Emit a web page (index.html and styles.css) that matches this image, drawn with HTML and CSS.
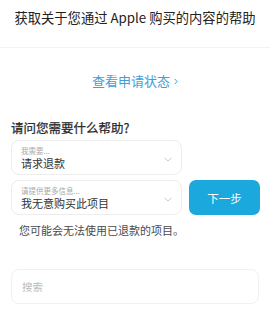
FILE: index.html
```html
<!DOCTYPE html>
<html lang="zh-CN">
<head>
<meta charset="utf-8">
<link rel="stylesheet" href="styles.css">
</head>
<body>
<header class="header">
  <h1 class="title">获取关于您通过 Apple 购买的内容的帮助</h1>
</header>
<div class="status">
  <a class="status-link" href="#">查看申请状态<svg class="status-chev" width="4" height="7" viewBox="0 0 4 7"><path d="M0.6 0.8 L3.2 3.5 L0.6 6.2" fill="none" stroke="currentColor" stroke-width="1"/></svg></a>
</div>
<section class="help">
  <h2 class="question">请问您需要什么帮助?</h2>
  <div class="form">
    <div class="field">
      <div class="field-text">
        <div class="field-label">我需要...</div>
        <div class="field-value">请求退款</div>
      </div>
      <svg class="chev" width="8" height="5" viewBox="0 0 8 5"><path d="M0.5 0.8 L4 4 L7.5 0.8" fill="none" stroke="#bcbcbc" stroke-width="0.8"/></svg>
    </div>
    <div class="spacer"></div>
    <div class="field">
      <div class="field-text">
        <div class="field-label">请提供更多信息...</div>
        <div class="field-value">我无意购买此项目</div>
      </div>
      <svg class="chev" width="8" height="5" viewBox="0 0 8 5"><path d="M0.5 0.8 L4 4 L7.5 0.8" fill="none" stroke="#bcbcbc" stroke-width="0.8"/></svg>
    </div>
    <button class="next">下一步</button>
  </div>
  <p class="note">您可能会无法使用已退款的项目。</p>
  <div class="search">搜索</div>
</section>
</body>
</html>
```

FILE: styles.css
```css
* { box-sizing: border-box; }
body {
  margin: 0;
  background: #fff;
  font-family: "Noto Sans CJK SC", "Noto Sans", sans-serif;
  color: #333;
}
.header {
  height: 48px;
  border-bottom: 1px solid #f3f3f3;
  padding-top: 9px;
}
.title {
  margin: 0;
  font-size: 13.3px;
  line-height: 18px;
  font-weight: 400;
  color: #222;
  text-align: center;
  white-space: nowrap;
}
.status {
  margin-top: 22px;
  text-align: center;
  line-height: 18px;
}
.status-link {
  font-size: 13px;
  color: #3fa0d6;
  text-decoration: none;
  display: inline-flex;
  align-items: center;
  gap: 4px;
}
.status-chev { margin-top: 1px; }
.help {
  padding: 0 10px 0 11px;
}
.question {
  margin: 29px 0 0;
  font-size: 12.5px;
  line-height: 18px;
  font-weight: 400;
  -webkit-text-stroke: 0.25px #2a2a2a;
  color: #2a2a2a;
}
.form {
  margin-top: 3px;
  display: grid;
  grid-template-columns: 171px 71px;
  column-gap: 7px;
  row-gap: 5px;
}
.field {
  height: 35px;
  border: 1px solid #ededed;
  border-radius: 8px;
  padding: 4px 9px 0 9px;
  display: flex;
  justify-content: space-between;
  align-items: center;
}
.field-text { align-self: flex-start; }
.field-label {
  font-size: 7.5px;
  line-height: 11px;
  color: #aaa;
}
.field-value {
  font-size: 11px;
  line-height: 14px;
  color: #333;
}
.next {
  height: 35px;
  border: none;
  border-radius: 7px;
  background: #1ba8dd;
  color: #fff;
  font-family: inherit;
  font-size: 11.5px;
  padding: 0;
}
.note {
  margin: 6px 0 0 8px;
  font-size: 11px;
  line-height: 18px;
  color: #4a4a4a;
}
.search {
  margin-top: 30px;
  width: 248px;
  height: 35px;
  border: 1px solid #f0f0f0;
  border-radius: 8px;
  padding-left: 10px;
  display: flex;
  align-items: center;
  font-size: 10.5px;
  color: #bbb;
}
```
